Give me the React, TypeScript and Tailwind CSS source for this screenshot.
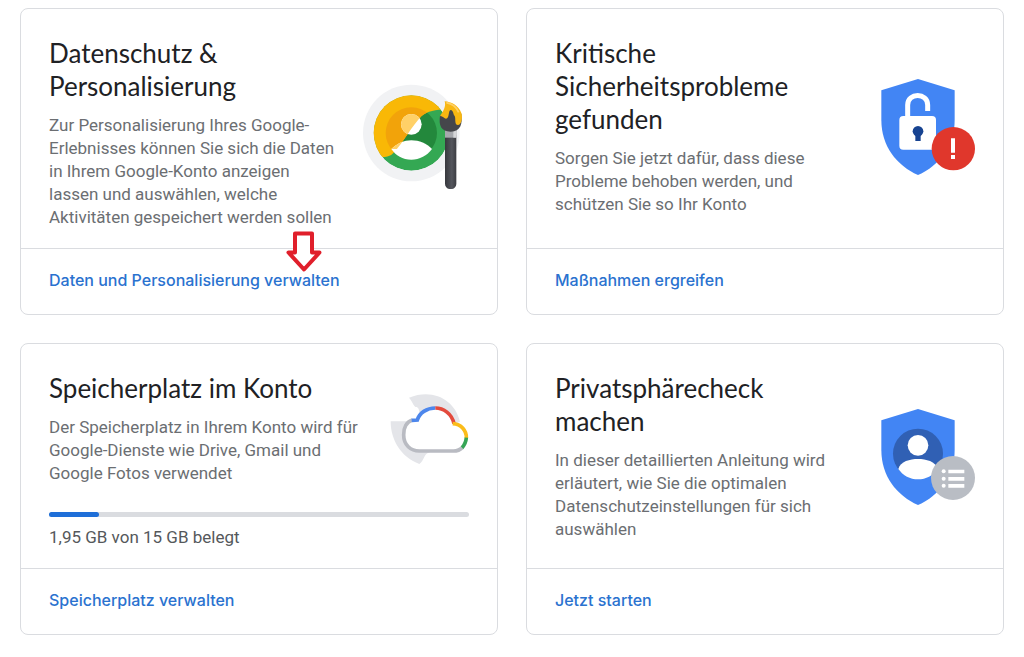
import type { ReactNode } from "react";

type CardProps = {
  title: string;
  text: string;
  link: string;
  icon: ReactNode;
  extra?: ReactNode;
  marker?: ReactNode;
};

function Card({ title, text, link, icon, extra, marker }: CardProps) {
  return (
    <section className="flex flex-col rounded-lg border border-[#dadce0] bg-white">
      <div className="flex-1 px-7 pt-7 pb-[19px]">
        <div className="flex items-center gap-4">
          <div className="min-w-0 flex-1">
            <h2 className="font-['Lato','Noto_Sans',sans-serif] text-[26px] leading-[33px] text-[#202124]">
              {title}
            </h2>
            <p className="mt-[11px] text-[17px] leading-[23px] text-[#6b6e72]">{text}</p>
          </div>
          {icon}
        </div>
        {extra}
      </div>
      <div className="flex border-t border-[#dadce0] px-7 pt-[19px] pb-[22px]">
        <a
          href="#"
          className="relative font-['Inter','Noto_Sans',sans-serif] text-base leading-6 font-medium text-[#2a72cf]"
        >
          {link}
          {marker}
        </a>
      </div>
    </section>
  );
}

function PersonalizationIcon() {
  return (
    <svg className="size-28 shrink-0" viewBox="21 20 336 336" aria-hidden="true">
      <defs>
        <linearGradient id="handle" x1="0" x2="1" y1="0" y2="0">
          <stop offset="0" stopColor="#37383d" />
          <stop offset="0.6" stopColor="#54565d" />
          <stop offset="1" stopColor="#3c3d42" />
        </linearGradient>
        <clipPath id="disc">
          <circle cx="184" cy="188" r="113" />
        </clipPath>
        <clipPath id="painted">
          <path d="M60 60H310V118C270 116 236 118 214 138C188 164 160 216 132 246C120 260 110 262 60 262Z" />
        </clipPath>
      </defs>
      <circle cx="184" cy="188" r="145" fill="#f1f2f4" />
      <g clipPath="url(#disc)">
        <circle cx="184" cy="188" r="113" fill="#34a853" />
        <circle cx="184" cy="188" r="77" fill="#23883c" />
        <g clipPath="url(#painted)">
          <rect x="60" y="60" width="250" height="220" fill="#f9b806" />
          <circle cx="184" cy="188" r="77" fill="#f2a30a" />
        </g>
      </g>
      <circle cx="184" cy="162" r="31" fill="#fff" />
      <path d="M124 236C142 220 162 210 184 210C208 210 230 220 246 236C232 256 208 268 184 268C158 268 137 256 124 236Z" fill="#fff" />
      <g clipPath="url(#painted)">
        <circle cx="184" cy="162" r="31" fill="#ffd067" />
        <path d="M124 236C142 220 162 210 184 210C208 210 230 220 246 236Z" fill="#ffd067" />
      </g>
      <path d="M285 194H319V340C319 362 285 362 285 340Z" fill="url(#handle)" />
      <path d="M285 178H320V202H285Z" fill="#a6a8ad" />
      <path d="M310 178H320V202H310Z" fill="#d5d6d9" />
      <path d="M270 136C266 164 272 183 302 184C332 183 338 160 334 130L300 108Z" fill="#45464b" />
      <path d="M284 93C302 94 326 105 334 128C339 142 334 164 324 164C312 164 318 143 314 137C309 133 311 120 302 119C294 120 299 145 288 145C282 145 283 139 270 137C282 120 288 108 284 93Z" fill="#f8b712" />
      <path d="M289 97C306 100 320 112 326 126" fill="none" stroke="#ffd067" strokeWidth="5" />
    </svg>
  );
}

function SecurityIcon() {
  return (
    <svg className="size-28 shrink-0" viewBox="9 30 336 336" aria-hidden="true">
      <path d="M174 54L284 88V176C284 256 238 313 174 342C110 313 64 256 64 176V88Z" fill="#4285f4" />
      <path d="M143 170V132C143 94 203 94 203 132V150" fill="none" stroke="#fff" strokeWidth="15" />
      <rect x="118" y="165" width="110" height="101" rx="12" fill="#fff" />
      <circle cx="174" cy="211" r="16" fill="#174391" />
      <path d="M166 218H182V240H166Z" fill="#174391" />
      <circle cx="280" cy="263" r="65" fill="#e0372c" />
      <path d="M273 232H285V275H273ZM273 282H285V294H273Z" fill="#fff" />
    </svg>
  );
}

function CloudIcon() {
  return (
    <svg className="size-21 shrink-0" viewBox="15 18 252 252" aria-hidden="true">
      <path d="M87 50C160 20 226 58 240 122L180 150L112 116C120 100 120 82 110 78C100 78 100 64 87 50Z" fill="#e4e5e9" />
      <path d="M32 121H100L150 214C130 218 134 238 118 249C66 230 32 180 32 121Z" fill="#e4e5e9" />
      <path d="M113 117C97 116 71 128 71 162C71 192 92 210 118 210H220C234 210 244 204 252 194C264 177 262 154 250 142C243 134 234 129 222 127C216 98 190 81 166 81C140 81 120 98 113 117Z" fill="#fff" />
      <g fill="none" strokeWidth="11">
        <path d="M97 117C80 122 70 140 71 162C71 192 92 210 118 210H220C234 210 240 207 248 199" stroke="#b9bbc2" />
        <path d="M95 118L112 117C118 96 140 81 166 81" stroke="#4d87ec" />
        <path d="M166 81C190 81 216 98 222 128" stroke="#e34a3d" />
        <path d="M218 128C244 129 260 150 259 171" stroke="#fbbc1a" />
        <path d="M259 170C258 182 254 192 246 200" stroke="#36a556" />
      </g>
    </svg>
  );
}

function PrivacyIcon() {
  return (
    <svg className="size-28 shrink-0" viewBox="9 30 336 336" aria-hidden="true">
      <path d="M174 54L284 88V176C284 256 238 313 174 342C110 313 64 256 64 176V88Z" fill="#4285f4" />
      <circle cx="174" cy="188" r="75" fill="#3060b4" />
      <circle cx="174" cy="163" r="31" fill="#fff" />
      <path d="M115 234C121 211 150 204 174 204C198 204 227 211 233 234C219 254 198 265 174 265C150 265 129 254 115 234Z" fill="#fff" />
      <circle cx="279" cy="261" r="66" fill="#b9bdc4" />
      <g fill="#fff">
        <circle cx="251" cy="241" r="6" />
        <circle cx="251" cy="263" r="6" />
        <circle cx="251" cy="284" r="6" />
        <path d="M265 236H313V247H265ZM265 258H313V269H265ZM265 279H313V290H265Z" />
      </g>
    </svg>
  );
}

function ArrowMarker() {
  return (
    <svg className="absolute right-[18px] bottom-5 h-[42px] w-9" viewBox="0 0 36 42" aria-hidden="true">
      <path
        d="M9 3.500H26V22.500H33.500L18 39.500L2.500 22.500H9Z"
        fill="#fff"
        stroke="#e01f2b"
        strokeWidth="4"
        strokeLinejoin="round"
      />
    </svg>
  );
}

function StorageUsage() {
  const used = 12;
  return (
    <div className="mt-[27px]">
      <div
        role="progressbar"
        aria-labelledby="storage-label"
        aria-valuenow={used}
        className="h-[5px] rounded-sm bg-[#dadce0]"
      >
        <div className="h-full rounded-sm bg-[#1f6fd8]" style={{ width: `${used}%` }} />
      </div>
      <p id="storage-label" className="mt-[9px] text-[17px] leading-[23px] text-[#55585b]">
        1,95 GB von 15 GB belegt
      </p>
    </div>
  );
}

export default function App() {
  return (
    <main className="grid grid-cols-2 gap-7 bg-white px-5 pt-2 pb-6 font-['Roboto','Noto_Sans',sans-serif]">
      <Card
        title="Datenschutz & Personalisierung"
        text="Zur Personalisierung Ihres Google-Erlebnisses können Sie sich die Daten in Ihrem Google-Konto anzeigen lassen und auswählen, welche Aktivitäten gespeichert werden sollen"
        link="Daten und Personalisierung verwalten"
        icon={<PersonalizationIcon />}
        marker={<ArrowMarker />}
      />
      <Card
        title="Kritische Sicherheitsprobleme gefunden"
        text="Sorgen Sie jetzt dafür, dass diese Probleme behoben werden, und schützen Sie so Ihr Konto"
        link="Maßnahmen ergreifen"
        icon={<SecurityIcon />}
      />
      <Card
        title="Speicherplatz im Konto"
        text="Der Speicherplatz in Ihrem Konto wird für Google-Dienste wie Drive, Gmail und Google Fotos verwendet"
        link="Speicherplatz verwalten"
        icon={<CloudIcon />}
        extra={<StorageUsage />}
      />
      <Card
        title="Privatsphärecheck machen"
        text="In dieser detaillierten Anleitung wird erläutert, wie Sie die optimalen Datenschutzeinstellungen für sich auswählen"
        link="Jetzt starten"
        icon={<PrivacyIcon />}
      />
    </main>
  );
}
